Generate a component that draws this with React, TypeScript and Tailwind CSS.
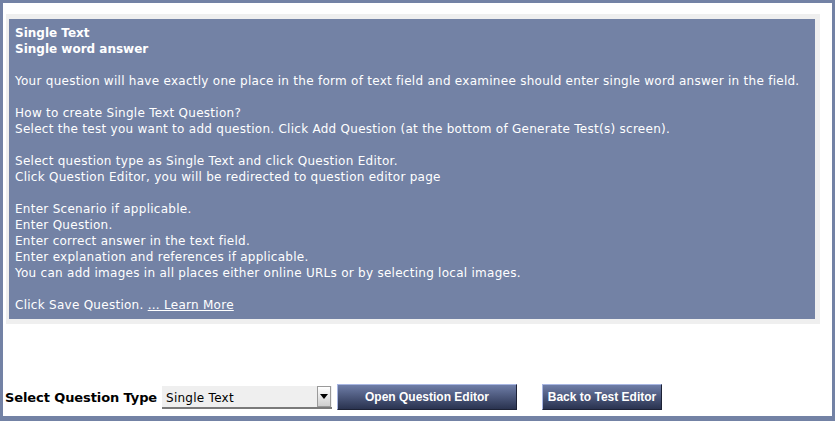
export default function App() {
  return (
    <div className="w-[835px] h-[421px] bg-white border-[#7382a5] border-t-[3px] border-l-[3px] border-r-[3px] border-b-[5px] flex flex-col font-['DejaVu_Sans',sans-serif]">
      {/* Info panel */}
      <div className="mt-[11px] ml-[3px] w-[814px] bg-[#efefef] pt-[5px] pb-[5px] pl-[3px] pr-[5px]">
        <div className="bg-[#7382a5] h-[300px] px-[6px] py-[6px] text-white text-[12px] leading-[16px] tracking-[0.27px]">
          <p className="font-bold tracking-[0px]">Single Text</p>
          <p className="font-bold tracking-[0px]">Single word answer</p>
          <p className="mt-[16px]">
            Your question will have exactly one place in the form of text field and examinee should enter single word answer in the field.
          </p>
          <p className="mt-[16px]">How to create Single Text Question?</p>
          <p>Select the test you want to add question. Click Add Question (at the bottom of Generate Test(s) screen).</p>
          <p className="mt-[16px]">Select question type as Single Text and click Question Editor.</p>
          <p>Click Question Editor, you will be redirected to question editor page</p>
          <p className="mt-[16px]">Enter Scenario if applicable.</p>
          <p>Enter Question.</p>
          <p>Enter correct answer in the text field.</p>
          <p>Enter explanation and references if applicable.</p>
          <p>You can add images in all places either online URLs or by selecting local images.</p>
          <p className="mt-[16px]">
            Click Save Question. <a className="underline cursor-pointer">... Learn More</a>
          </p>
        </div>
      </div>

      {/* Bottom controls */}
      <div className="mt-auto mb-[6px] ml-[2px] flex items-center">
        <span className="font-bold text-[13px] text-black w-[154px] whitespace-nowrap tracking-[-0.1px] pt-[1px]">Select Question Type</span>
        <div className="ml-[3px] mt-[1px] w-[170px] h-[23px] bg-[#efefef] border-b-2 border-[#7a7a7a] flex items-center justify-between">
          <span className="pl-[4px] pt-[2px] text-[12px] text-black tracking-[0.27px]">Single Text</span>
          <span className="w-[14px] h-[21px] mr-[1px] border border-[#9a9a9a] bg-gradient-to-b from-white to-[#cfcfcf] flex items-center justify-center">
            <span className="w-0 h-0 border-l-[4px] border-r-[4px] border-t-[5px] border-l-transparent border-r-transparent border-t-black" />
          </span>
        </div>
        <button className="ml-[5px] w-[180px] h-[26px] bg-gradient-to-b from-[#6f7ea8] to-[#2a3350] border-t border-l border-[#a8b6e2] border-r border-b border-r-[#1d2236] border-b-[#1d2236] text-white font-bold text-[12px] font-['Liberation_Sans',sans-serif]">
          Open Question Editor
        </button>
        <button className="ml-[25px] w-[120px] h-[26px] bg-gradient-to-b from-[#6f7ea8] to-[#2a3350] border-t border-l border-[#a8b6e2] border-r border-b border-r-[#1d2236] border-b-[#1d2236] text-white font-bold text-[12px] font-['Liberation_Sans',sans-serif]">
          Back to Test Editor
        </button>
      </div>
    </div>
  );
}
